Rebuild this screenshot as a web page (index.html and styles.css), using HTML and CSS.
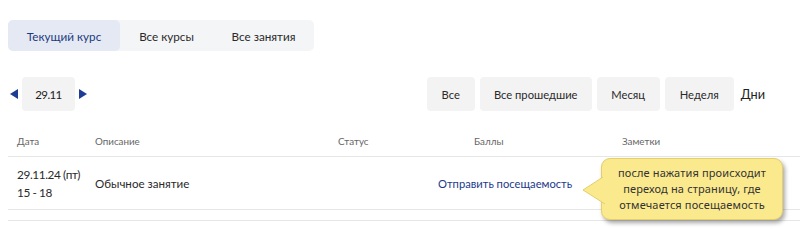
FILE: index.html
```html
<!DOCTYPE html>
<html lang="ru">
<head>
<meta charset="utf-8">
<link rel="stylesheet" href="styles.css">
</head>
<body>
<div class="page">
  <div class="tabs">
    <div class="tab active">Текущий курс</div>
    <div class="tab t2">Все курсы</div>
    <div class="tab t3">Все занятия</div>
  </div>

  <div class="toolbar">
    <div class="datenav">
      <svg class="arrow" width="8" height="10" viewBox="0 0 8 10"><path d="M8 0V10L0 5Z" fill="#1d3c94"/></svg>
      <div class="datebox">29.11</div>
      <svg class="arrow" width="8" height="10" viewBox="0 0 8 10"><path d="M0 0V10L8 5Z" fill="#1d3c94"/></svg>
    </div>
    <div class="filters">
      <div class="btn b1">Все</div>
      <div class="btn b2">Все прошедшие</div>
      <div class="btn b3">Месяц</div>
      <div class="btn b4">Неделя</div>
      <div class="plain">Дни</div>
    </div>
  </div>

  <div class="table">
    <div class="row head">
      <div>Дата</div>
      <div>Описание</div>
      <div>Статус</div>
      <div class="c-score">Баллы</div>
      <div>Заметки</div>
    </div>
    <div class="row body">
      <div class="date">29.11.24 (пт)<br>15 - 18</div>
      <div>Обычное занятие</div>
      <div></div>
      <div><a class="link">Отправить посещаемость</a></div>
      <div></div>
    </div>
    <div class="row last"></div>

    <div class="callout">
      <svg class="tail" width="24" height="30" viewBox="0 0 24 30"><path d="M21 1 L1 14 L23 28" fill="#fbe98e" stroke="#e4cf6a" stroke-width="1"/></svg>
      <div class="bubble">после нажатия происходит<br>переход на страницу, где<br>отмечается посещаемость</div>
    </div>
  </div>
</div>
</body>
</html>
```

FILE: styles.css
```css
* { box-sizing: border-box; }
html, body { margin: 0; background: #fff; }
body {
  font-family: Lato, "Noto Sans", sans-serif;
  color: #222;
  width: 800px;
  height: 230px;
  overflow: hidden;
}
.page { padding: 20px 0 0 8px; }

.tabs {
  display: inline-flex;
  background: #f4f5f7;
  border-radius: 5px;
  height: 31px;
}
.tab {
  display: flex;
  align-items: center;
  justify-content: center;
  font-size: 11.7px;
  color: #2a2a2a;
  border-radius: 5px;
}
.tab.active { width: 112px; background: #e4e9f4; color: #1d3a7e; }
.tab.t2 { width: 93px; }
.tab.t3 { width: 101px; }

.toolbar {
  display: flex;
  justify-content: space-between;
  align-items: center;
  margin-top: 26px;
  padding-right: 35px;
}
.datenav { display: flex; align-items: center; gap: 4px; margin-left: 2px; }
.datebox {
  width: 53px;
  height: 34px;
  background: #f3f3f3;
  border-radius: 4px;
  display: flex;
  align-items: center;
  justify-content: center;
  font-size: 11.5px;
  letter-spacing: -0.6px;
}
.filters { display: flex; align-items: center; gap: 5px; }
.btn {
  height: 34px;
  background: #f3f3f3;
  border-radius: 4px;
  display: flex;
  align-items: center;
  justify-content: center;
  font-size: 11.2px;
  color: #2a2a2a;
}
.b1 { width: 48px; }
.b2 { width: 112px; }
.b3 { width: 63px; }
.b4 { width: 69px; }
.plain { font-size: 12.7px; margin-left: 2px; }

.table { position: relative; margin-top: 17px; }
.row {
  display: grid;
  grid-template-columns: 78px 243px 100px 184px 1fr;
  padding-left: 9px;
  align-items: center;
  border-bottom: 1px solid #e6e6e6;
}
.row.head { height: 29px; font-size: 9.8px; color: #666; padding-bottom: 2px; }
.row.head .c-score { padding-left: 36px; }
.row.body { height: 53px; font-size: 11.6px; color: #2a2a2a; }
.date { line-height: 18px; padding-top: 1px; font-size: 11.8px; letter-spacing: -0.4px; }
.link { color: #1d3a8a; font-size: 11.2px; }
.row.last { height: 11px; }

.callout {
  position: absolute;
  left: 574px;
  top: 30px;
  display: flex;
  align-items: flex-start;
}
.tail { margin-top: 18px; margin-right: -5px; position: relative; z-index: 1; }
.bubble {
  width: 182px;
  height: 62px;
  background: #fbe98e;
  border: 1px solid #e4cf6a;
  border-radius: 9px;
  box-shadow: 2px 3px 4px rgba(0,0,0,0.35);
  font-family: "Noto Sans", sans-serif;
  font-size: 11px;
  line-height: 16px;
  color: #333;
  text-align: center;
  padding-top: 6px;
  letter-spacing: 0.15px;
}
```
